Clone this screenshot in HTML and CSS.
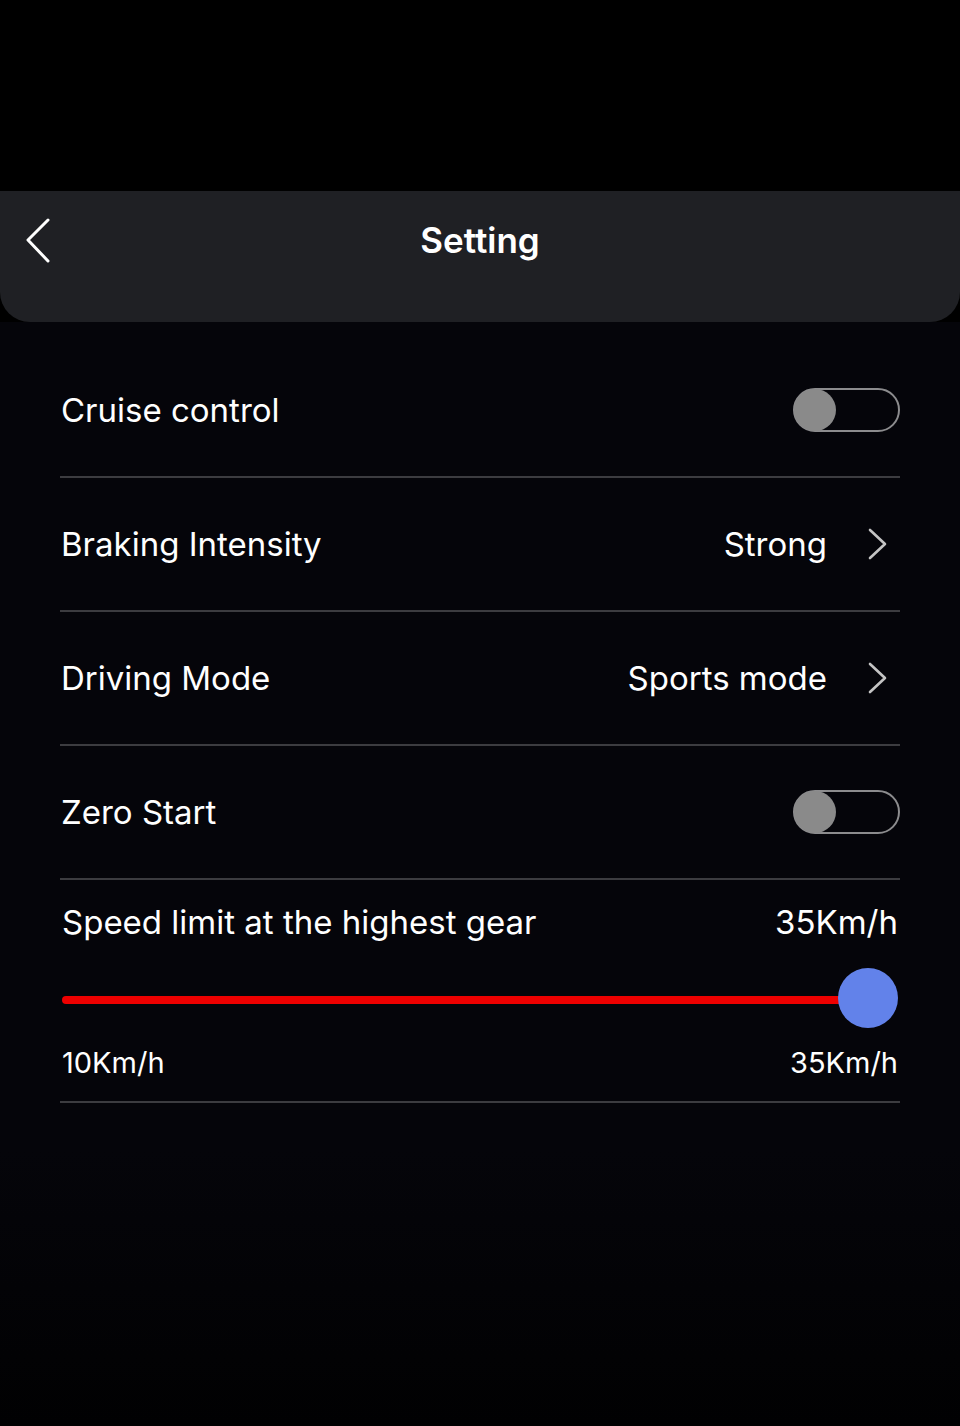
FILE: index.html
```html
<!DOCTYPE html>
<html lang="en">
<head>
    <meta charset="UTF-8">
    <meta name="viewport" content="width=device-width, initial-scale=1.0">
    <title>Setting</title>
    <link rel="stylesheet" href="styles.css">
</head>
<body>
    <div class="status-bar"></div>
    <header class="top-bar">
        <button class="back-btn" aria-label="Back">
            <svg width="30" height="46" viewBox="0 0 30 46">
                <polyline points="22,2 2,22 22,43" fill="none" stroke="#fff" stroke-width="3" stroke-linecap="round" stroke-linejoin="round"/>
            </svg>
        </button>
        <h1 class="title">Setting</h1>
    </header>

    <main class="settings">
        <div class="row">
            <span class="label">Cruise control</span>
            <span class="switch"><span class="knob"></span></span>
        </div>
        <div class="row">
            <span class="label">Braking Intensity</span>
            <span class="value">Strong</span>
            <svg class="chevron" width="20" height="32" viewBox="0 0 20 32">
                <polyline points="3,2 18,16 3,30" fill="none" stroke="#c4c4c4" stroke-width="2.6" stroke-linecap="round" stroke-linejoin="round"/>
            </svg>
        </div>
        <div class="row">
            <span class="label">Driving Mode</span>
            <span class="value">Sports mode</span>
            <svg class="chevron" width="20" height="32" viewBox="0 0 20 32">
                <polyline points="3,2 18,16 3,30" fill="none" stroke="#c4c4c4" stroke-width="2.6" stroke-linecap="round" stroke-linejoin="round"/>
            </svg>
        </div>
        <div class="row">
            <span class="label">Zero Start</span>
            <span class="switch"><span class="knob"></span></span>
        </div>
        <div class="speed">
            <div class="speed-head">
                <span class="label">Speed limit at the highest gear</span>
                <span class="speed-value">35Km/h</span>
            </div>
            <div class="slider">
                <div class="track"></div>
                <div class="thumb"></div>
            </div>
            <div class="speed-range">
                <span>10Km/h</span>
                <span>35Km/h</span>
            </div>
        </div>
    </main>
</body>
</html>
```

FILE: styles.css
```css
body {
    margin: 0;
    background-color: #000;
    font-family: Inter, "Noto Sans", sans-serif;
    color: #fff;
}
.status-bar {
    height: 191px;
    background-color: #000;
}
.top-bar {
    position: relative;
    height: 131px;
    background-color: #1f2024;
    border-radius: 0 0 30px 30px;
}
.back-btn {
    position: absolute;
    left: 26px;
    top: 27px;
    padding: 0;
    border: none;
    background: none;
}
.title {
    margin: 0;
    padding-top: 29px;
    text-align: center;
    font-size: 35px;
    font-weight: 600;
    line-height: 40px;
}
.settings {
    background: linear-gradient(#05050a 75%, #010102);
    padding: 22px 60px 0;
    min-height: 1104px;
    box-sizing: border-box;
}
.row {
    display: flex;
    align-items: center;
    height: 132px;
    border-bottom: 2px solid #3c3c40;
}
.label {
    flex: 1;
    font-size: 33px;
    padding-left: 1px;
}
.value {
    font-size: 33px;
}
.chevron {
    margin-left: 40px;
    margin-right: 13px;
}
.switch {
    position: relative;
    width: 103px;
    height: 40px;
    border: 2px solid #8c8c8e;
    border-radius: 22px;
}
.knob {
    position: absolute;
    left: -1px;
    top: -1px;
    width: 42px;
    height: 42px;
    border-radius: 50%;
    background-color: #8a8a8a;
}
.speed {
    padding: 24px 0 20px;
    border-bottom: 2px solid #3c3c40;
}
.speed-head {
    display: flex;
    align-items: center;
    line-height: 36px;
}
.speed-head .label {
    padding-left: 2px;
}
.speed-value {
    font-size: 33px;
    padding-right: 2px;
}
.slider {
    position: relative;
    height: 60px;
    margin-top: 28px;
}
.track {
    position: absolute;
    left: 2px;
    right: 30px;
    top: 28px;
    height: 8px;
    border-radius: 4px;
    background-color: #ee0000;
}
.thumb {
    position: absolute;
    right: 2px;
    top: 0;
    width: 60px;
    height: 60px;
    border-radius: 50%;
    background-color: #6282ea;
}
.speed-range {
    display: flex;
    justify-content: space-between;
    margin-top: 17px;
    padding: 0 2px;
    font-size: 29px;
    line-height: 36px;
}
```
